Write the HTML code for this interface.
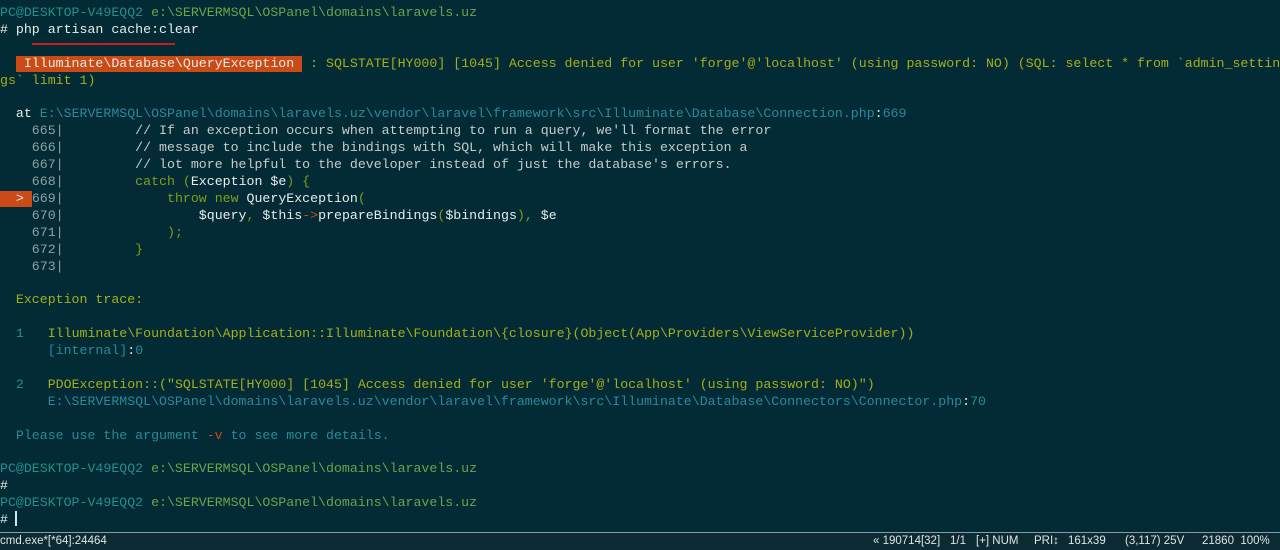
<!DOCTYPE html>
<html><head><meta charset="utf-8"><style>
html,body{margin:0;padding:0;}
body{width:1280px;height:549px;background:#022b36;position:relative;overflow:hidden;font-family:"Liberation Mono",monospace;font-size:13.25px;}
.l{position:absolute;left:0;white-space:pre;line-height:17px;height:17px;}
.t{color:#23908c}.g{color:#6aa54a}.w{color:#e8ecea}.y{color:#a6ae1a}.c{color:#c6cccc}.n{color:#8ea3a6}.gr{color:#7f9f16}.o{color:#cb4b16}.p{color:#2a8a9a}
.box{position:absolute;left:16px;top:56px;width:286px;height:16px;background:#cb4b16;}
.ul{position:absolute;left:32px;top:43px;width:143px;height:2px;background:#c81e1e;}
.mk{position:absolute;left:0;top:191px;width:32px;height:16px;background:#cb4b16;}
.cur{position:absolute;left:15px;top:511px;width:2px;height:15px;background:#cfe6ee;}
.sb{position:absolute;left:0;top:532px;width:1280px;height:17px;background:#0c2a34;border-top:1px solid #8a9ca2;font-family:"Liberation Sans",sans-serif;font-size:11.5px;color:#dfe4e6;line-height:16px;}
.sb span{position:absolute;white-space:pre}
</style></head><body>
<div class="box"></div><div class="ul"></div><div class="mk"></div>
<div class="l" style="top:4px"><span class="t">PC@DESKTOP-V49EQQ2</span> <span class="g">e:\SERVERMSQL\OSPanel\domains\laravels.uz</span></div>
<div class="l w" style="top:21px"># php artisan cache:clear</div>
<div class="l" style="top:55px"><span class="w">   Illuminate\Database\QueryException  </span><span class="y">: SQLSTATE[HY000] [1045] Access denied for user 'forge'@'localhost' (using password: NO) (SQL: select * from `admin_settin</span></div>
<div class="l y" style="top:72px">gs` limit 1)</div>
<div class="l" style="top:105px"><span class="w">  at </span><span class="p">E:\SERVERMSQL\OSPanel\domains\laravels.uz\vendor\laravel\framework\src\Illuminate\Database\Connection.php</span><span class="w">:</span><span class="p">669</span></div>
<div class="l" style="top:122px"><span class="n">    665|</span><span class="c">         // If an exception occurs when attempting to run a query, we'll format the error</span></div>
<div class="l" style="top:139px"><span class="n">    666|</span><span class="c">         // message to include the bindings with SQL, which will make this exception a</span></div>
<div class="l" style="top:156px"><span class="n">    667|</span><span class="c">         // lot more helpful to the developer instead of just the database's errors.</span></div>
<div class="l" style="top:173px"><span class="n">    668|</span><span class="gr">         catch (</span><span class="w">Exception $e</span><span class="gr">) {</span></div>
<div class="l" style="top:190px"><span class="w">  &gt; </span><span class="n">669|</span><span class="gr">             throw new </span><span class="w">QueryException</span><span class="gr">(</span></div>
<div class="l" style="top:207px"><span class="n">    670|</span><span class="w">                 $query</span><span class="gr">, </span><span class="w">$this</span><span class="o">-&gt;</span><span class="w">prepareBindings</span><span class="gr">(</span><span class="w">$bindings</span><span class="gr">), </span><span class="w">$e</span></div>
<div class="l" style="top:224px"><span class="n">    671|</span><span class="gr">             );</span></div>
<div class="l" style="top:241px"><span class="n">    672|</span><span class="gr">         }</span></div>
<div class="l" style="top:258px"><span class="n">    673|</span></div>
<div class="l y" style="top:291px">  Exception trace:</div>
<div class="l" style="top:325px"><span class="p">  1   </span><span class="y">Illuminate\Foundation\Application::Illuminate\Foundation\{closure}(Object(App\Providers\ViewServiceProvider))</span></div>
<div class="l" style="top:342px"><span class="p">      [internal]</span><span class="w">:</span><span class="p">0</span></div>
<div class="l" style="top:376px"><span class="p">  2   </span><span class="y">PDOException::("SQLSTATE[HY000] [1045] Access denied for user 'forge'@'localhost' (using password: NO)")</span></div>
<div class="l" style="top:393px"><span class="p">      E:\SERVERMSQL\OSPanel\domains\laravels.uz\vendor\laravel\framework\src\Illuminate\Database\Connectors\Connector.php</span><span class="w">:</span><span class="p">70</span></div>
<div class="l" style="top:427px"><span class="p">  Please use the argument </span><span class="o">-v</span><span class="p"> to see more details.</span></div>
<div class="l" style="top:460px"><span class="t">PC@DESKTOP-V49EQQ2</span> <span class="g">e:\SERVERMSQL\OSPanel\domains\laravels.uz</span></div>
<div class="l w" style="top:477px">#</div>
<div class="l" style="top:494px"><span class="t">PC@DESKTOP-V49EQQ2</span> <span class="g">e:\SERVERMSQL\OSPanel\domains\laravels.uz</span></div>
<div class="l w" style="top:511px">#</div>
<div class="cur"></div>
<div class="sb"><span style="left:0">cmd.exe*[*64]:24464</span><span style="left:873px">« 190714[32]</span><span style="left:950px">1/1</span><span style="left:976px">[+] NUM</span><span style="left:1034px">PRI↕</span><span style="left:1068px">161x39</span><span style="left:1125px">(3,117) 25V</span><span style="left:1202px">21860  100%</span></div>
</body></html>
